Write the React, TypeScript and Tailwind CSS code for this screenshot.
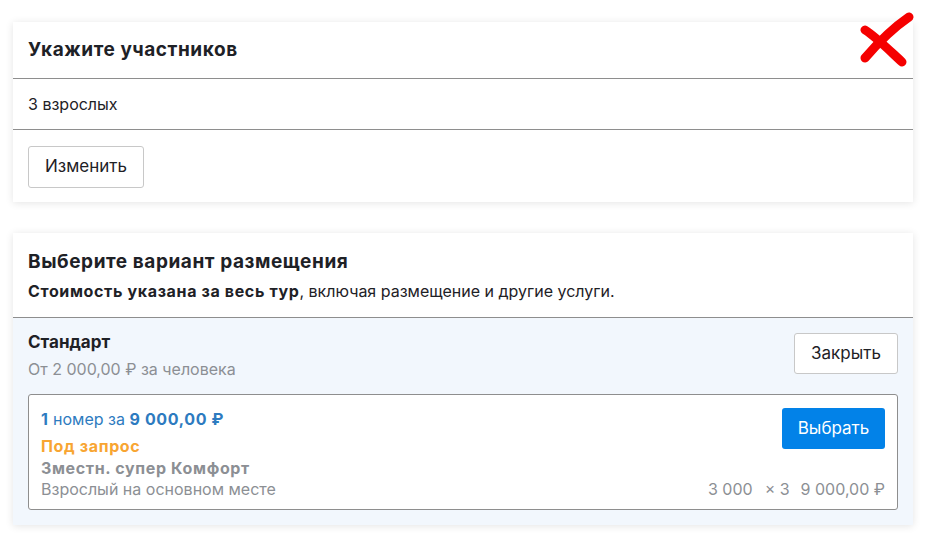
import React from 'react';

const font = { fontFamily: 'Inter, "Noto Sans", sans-serif' };

const RedCross = () => (
  <svg
    className="absolute right-[15px] top-[8px]"
    width="60"
    height="60"
    viewBox="0 0 60 60"
    fill="none"
    aria-hidden="true"
  >
    <path d="M10 50 C 22 36, 38 20, 54 9" stroke="#f50000" strokeWidth="9" strokeLinecap="round" />
    <path d="M10 22 C 20 28, 34 42, 47 54" stroke="#f50000" strokeWidth="9" strokeLinecap="round" />
  </svg>
);

const App: React.FC = () => {
  return (
    <div className="relative min-h-[542px] bg-white pl-[13px] pr-[17px] pt-[22px] text-[#1e2126]" style={font}>
      {/* Participants */}
      <section className="bg-white shadow-[0_1px_8px_rgba(0,0,0,0.11)]">
        <div className="flex h-[57px] items-center border-b border-[#8e8e8e] px-[15px]">
          <h2 className="text-[19px] font-bold tracking-[0.03em]">Укажите участников</h2>
        </div>
        <div className="flex h-[51px] items-center border-b border-[#8e8e8e] px-[15px] text-[16px]">
          3 взрослых
        </div>
        <div className="px-[15px] pt-[16px] pb-[14px]">
          <button className="h-[42px] w-[116px] rounded-[3px] border border-[#c8c8c8] bg-white text-[17px]">
            Изменить
          </button>
        </div>
      </section>

      {/* Accommodation */}
      <section className="mt-[31px] bg-white shadow-[0_1px_8px_rgba(0,0,0,0.11)]">
        <div className="border-b border-[#8e8e8e] px-[15px] pt-[17px] pb-[15px]">
          <h2 className="text-[19px] font-bold leading-[24px] tracking-[0.03em]">Выберите вариант размещения</h2>
          <p className="mt-[6px] text-[16px] leading-[22px]">
            <span className="font-bold tracking-[0.04em]">Стоимость указана за весь тур</span>, включая размещение и другие услуги.
          </p>
        </div>
        <div className="bg-[#f2f7fd] px-[15px] pt-[15px] pb-[15px]">
          <div className="flex items-start justify-between">
            <div className="-mt-[2px]">
              <div className="text-[17px] font-bold leading-[22px]">Стандарт</div>
              <div className="mt-[5px] text-[16px] leading-[22px] text-[#8c8f94]">От 2 000,00 ₽ за человека</div>
            </div>
            <button className="h-[41px] w-[104px] rounded-[3px] border border-[#c8c8c8] bg-white text-[17px]">
              Закрыть
            </button>
          </div>
          <div className="mt-[14px] flex justify-between rounded-[3px] border border-[#8e8e8e] bg-white px-[12px] pt-[13px] pb-[10px]">
            <div>
              <div className="text-[16px] leading-[22px] text-[#2d7bc0]">
                <span className="font-bold tracking-[0.04em]">1</span> номер за{' '}
                <span className="font-bold tracking-[0.04em]">9 000,00 ₽</span>
              </div>
              <div className="mt-[5px] text-[16px] font-bold leading-[22px] tracking-[0.04em] text-[#f8a532]">Под запрос</div>
              <div className="text-[16px] font-bold leading-[22px] tracking-[0.04em] text-[#8c8f94]">Зместн. супер Комфорт</div>
              <div className="text-[16px] leading-[20px] text-[#8c8f94]">Взрослый на основном месте</div>
            </div>
            <div className="flex flex-col items-end justify-between">
              <button className="h-[41px] w-[103px] rounded-[3px] bg-[#0282e8] text-[17px] text-white">
                Выбрать
              </button>
              <div className="flex text-[16px] leading-[20px] text-[#8c8f94]">
                <span>3 000</span>
                <span className="ml-[12px]">× 3</span>
                <span className="ml-[11px]">9 000,00 ₽</span>
              </div>
            </div>
          </div>
        </div>
      </section>

      <RedCross />
    </div>
  );
};

export default App;
